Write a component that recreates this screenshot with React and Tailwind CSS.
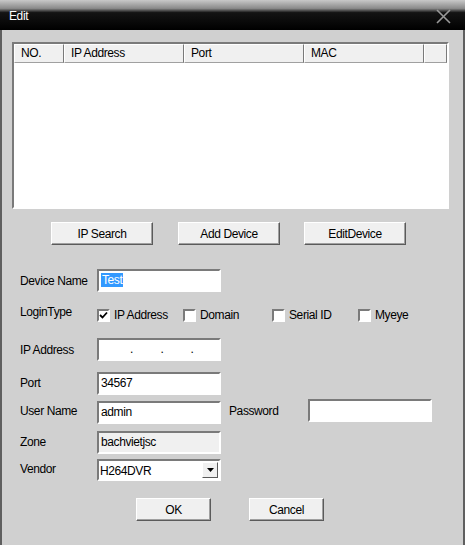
import React from "react";

const sunken =
  "border-2 border-t-[#7a7a7a] border-l-[#7a7a7a] border-b-white border-r-white bg-white";
const raised =
  "border border-t-white border-l-white border-b-[#5a5a5a] border-r-[#5a5a5a] shadow-[inset_-1px_-1px_0_#a0a0a0] bg-[#f0f0f0]";

function Button({ children, className = "" }) {
  return (
    <button
      className={`${raised} h-[23px] flex items-center justify-center text-[12px] text-black ${className}`}
    >
      {children}
    </button>
  );
}

function Field({ children, className = "", w = "w-[124px]" }) {
  return (
    <div className={`${sunken} ${w} h-[23px] px-[2px] pt-[1px] text-[12px] text-black leading-[16px] ${className}`}>
      {children}
    </div>
  );
}

function Label({ children, className = "" }) {
  return <div className={`w-[77px] text-[12px] text-black ${className}`}>{children}</div>;
}

function Check({ checked, label, className = "" }) {
  return (
    <div className={`flex items-center gap-[4px] ${className}`}>
      <div className="w-[13px] h-[13px] border-2 border-t-[#7a7a7a] border-l-[#7a7a7a] border-b-white border-r-white bg-white flex items-center justify-center">
        {checked && (
          <svg width="9" height="9" viewBox="0 0 9 9">
            <path d="M1 4 L3.5 6.5 L8 1.5" stroke="#000" strokeWidth="1.8" fill="none" />
          </svg>
        )}
      </div>
      <span className="text-[12px] text-black">{label}</span>
    </div>
  );
}

export default function App() {
  const cols = [
    ["NO.", "w-[50px]"],
    ["IP Address", "w-[120px]"],
    ["Port", "w-[120px]"],
    ["MAC", "w-[120px]"],
    ["", "flex-1"],
  ];
  return (
    <div
      className="w-[465px] h-[545px] bg-[#d0d0d0] flex flex-col overflow-hidden tracking-[-0.4px]"
      style={{ fontFamily: '"Liberation Sans", Arial, sans-serif' }}
    >
      <div className="h-[30px] shrink-0 flex items-center justify-between pl-[9px] pr-[14px] bg-[linear-gradient(to_bottom,#c8c8c8_0%,#8a8a8a_28%,#141414_42%,#000_100%)]">
        <span className="text-white text-[12px] mt-[1px]">Edit</span>
        <svg width="15" height="15" viewBox="0 0 15 15" className="mt-[2px]">
          <path d="M1 1 L14 14 M14 1 L1 14" stroke="#9a9a9a" strokeWidth="1.6" />
        </svg>
      </div>

      <div className="flex-1 flex flex-col border-l-2 border-r-2 border-[#5f5f5f] px-[10px]">
        <div className={`${sunken} mt-[12px] w-[437px] h-[167px]`}>
          <div className="flex h-[19px]">
            {cols.map(([t, w], i) => (
              <div
                key={i}
                className={`${w} bg-[#f0f0f0] border border-t-white border-l-white border-b-[#a0a0a0] border-r-[#7a7a7a] text-[12px] text-black pl-[6px] leading-[17px]`}
              >
                {t}
              </div>
            ))}
          </div>
        </div>

        <div className="flex mt-[13px]">
          <Button className="ml-[39px] w-[102px]">IP Search</Button>
          <Button className="ml-[25px] w-[102px]">Add Device</Button>
          <Button className="ml-[24px] w-[102px]">EditDevice</Button>
        </div>

        <div className="flex flex-col pl-[8px]">
          <div className="flex items-center mt-[24px] h-[23px]">
            <Label>Device Name</Label>
            <Field>
              <span className="bg-[#3399ff] text-white px-[1px]">Test</span>
            </Field>
          </div>

          <div className="flex items-center mt-[11px] h-[24px]">
            <Label className="mb-[6px]">LoginType</Label>
            <Check checked label="IP Address" className="w-[86px]" />
            <Check label="Domain" className="w-[89px]" />
            <Check label="Serial ID" className="w-[86px]" />
            <Check label="Myeye" />
          </div>

          <div className="flex items-center mt-[11px] h-[23px]">
            <Label>IP Address</Label>
            <Field className="flex">
              <span className="w-[15px]" />
              <span className="w-[31px] text-center">.</span>
              <span className="w-[30px] text-center">.</span>
              <span className="w-[30px] text-center">.</span>
            </Field>
          </div>

          <div className="flex items-center mt-[11px] h-[22px]">
            <Label>Port</Label>
            <Field className="h-[22px]">34567</Field>
          </div>

          <div className="flex items-center mt-[7px] h-[22px]">
            <Label className="mt-[-3px]">User Name</Label>
            <Field className="h-[22px]">admin</Field>
            <div className="w-[87px] pl-[8px] text-[12px] text-black mt-[-3px]">Password</div>
            <Field className="h-[23px] mt-[-3px]" w="w-[124px]" />
          </div>

          <div className="flex items-center mt-[8px] h-[22px]">
            <Label>Zone</Label>
            <Field className="h-[22px] !bg-[#f0f0f0] border-b-[#f0f0f0] border-r-[#f0f0f0]">bachvietjsc</Field>
          </div>

          <div className="flex items-center mt-[6px] h-[22px]">
            <Label className="mt-[-3px]">Vendor</Label>
            <div className={`${sunken} w-[124px] h-[22px] flex items-center justify-between pl-[1px] pr-[1px]`}>
              <span className="text-[12px] text-black mt-[1px]">H264DVR</span>
              <div className="w-[16px] h-[16px] border border-t-white border-l-white border-b-[#5a5a5a] border-r-[#5a5a5a] bg-[#f0f0f0] flex items-center justify-center">
                <svg width="7" height="4" viewBox="0 0 7 4">
                  <path d="M0 0 H7 L3.5 4 Z" fill="#000" />
                </svg>
              </div>
            </div>
          </div>

          <div className="flex mt-[17px]">
            <Button className="ml-[116px] w-[75px]">OK</Button>
            <Button className="ml-[38px] w-[75px]">Cancel</Button>
          </div>
        </div>
      </div>
    </div>
  );
}
